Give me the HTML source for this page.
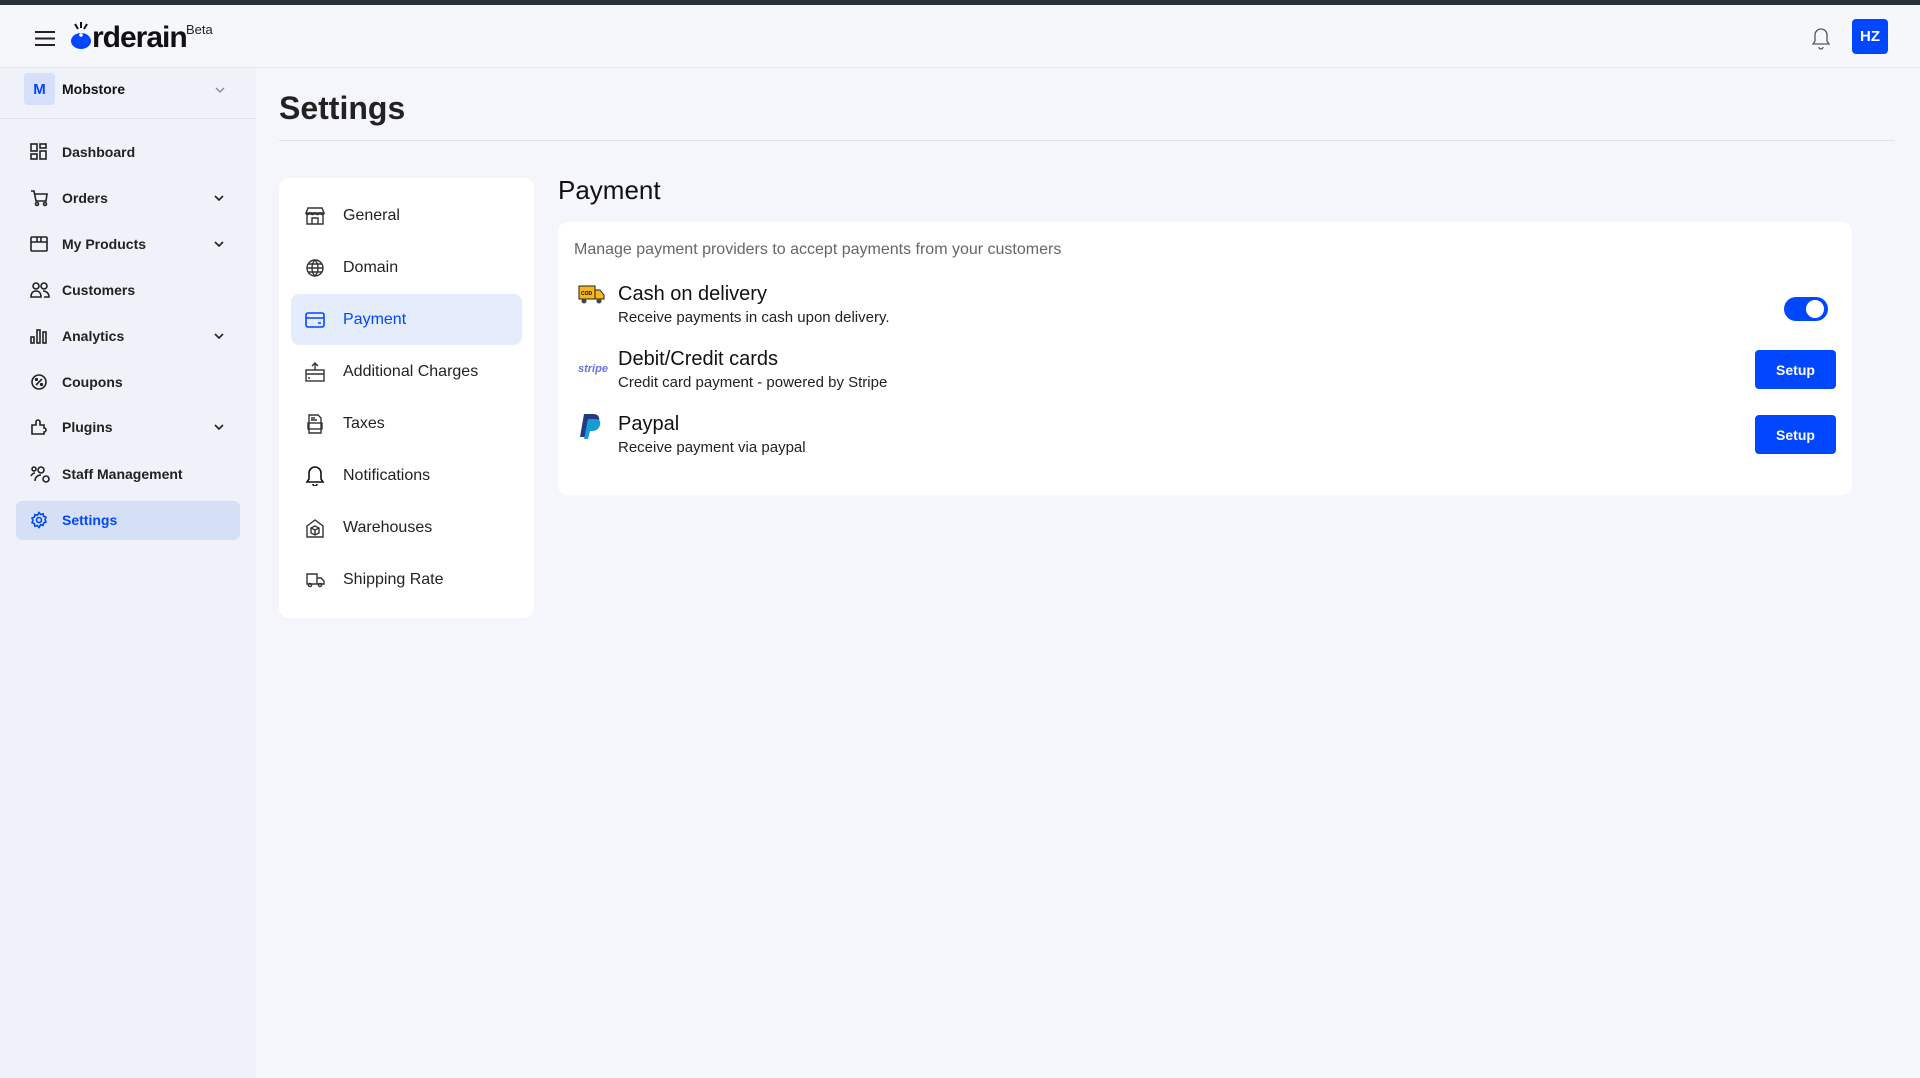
<!DOCTYPE html>
<html><head><meta charset="utf-8"><style>
*{box-sizing:border-box;margin:0;padding:0}
body{width:1920px;height:1078px;overflow:hidden;font-family:"Liberation Sans",sans-serif;background:#f5f6fb;color:#111;position:relative}
.top{position:absolute;left:0;top:0;width:1920px;height:5px;background:#263238}
.hdr{position:absolute;left:0;top:5px;width:1920px;height:63px;background:#f6f7fb;border-bottom:1px solid #e4e6ea}
.side{position:absolute;left:0;top:68px;width:256px;height:1010px;background:#eff2f9}
.abs{position:absolute}
.nav{position:absolute;left:0;width:256px;height:38px;display:flex;align-items:center;font-size:14px;font-weight:bold;color:#222}
.nav svg{position:absolute;left:30px}
.nav span{position:absolute;left:62px}
.nav .ch{position:absolute;left:214px}
.menu{position:absolute;left:279px;top:178px;width:255px;height:440px;background:#fff;border-radius:10px}
.mi{position:absolute;left:12px;width:231px;height:51px;display:flex;align-items:center;font-size:16px;color:#222;border-radius:8px}
.mi svg{position:absolute;left:14px}
.mi span{position:absolute;left:52px}
.card{position:absolute;left:558px;top:222px;width:1294px;height:273px;background:#fff;border-radius:10px}
.t{position:absolute;left:60px;font-size:20px;color:#111}
.s{position:absolute;left:60px;font-size:15px;color:#222}
.btn{position:absolute;left:1197px;width:81px;height:39px;background:#0047ff;color:#fff;border-radius:4px;font-size:14px;font-weight:bold;display:flex;align-items:center;justify-content:center}
</style></head><body>
<div class="top"></div>
<div class="hdr">
 <svg class="abs" style="left:34px;top:25px" width="22" height="17"><path d="M1 2H21M1 8.5H21M1 15H21" stroke="#222" stroke-width="2"/></svg>
 <svg class="abs" style="left:70px;top:17px" width="22" height="30"><path d="M5 2L8 7M11 0V6M17 2L14 7" stroke="#111" stroke-width="2"/><path d="M1 19a10 8 0 0 1 20 0a10 8 0 0 1-20 0z" fill="#0047ff"/><circle cx="11" cy="13" r="1.8" fill="#fff"/></svg>
 <div class="abs" style="left:92px;top:16px;font-size:30px;font-weight:bold;letter-spacing:-1px;color:#111">rderain</div>
 <div class="abs" style="left:186px;top:17px;font-size:13px;color:#222">Beta</div>
 <svg class="abs" style="left:1811px;top:22px" width="20" height="24"><path d="M10 2a6 6 0 0 0-6 6v6l-2 3h16l-2-3V8a6 6 0 0 0-6-6zM8 20a2 2 0 0 0 4 0" fill="none" stroke="#555" stroke-width="1.3"/></svg>
 <div class="abs" style="left:1852px;top:14px;width:36px;height:35px;background:#0047ff;border-radius:4px;color:#fff;font-weight:bold;font-size:15px;display:flex;align-items:center;justify-content:center">HZ</div>
</div>
<div class="side">
 <div class="abs" style="left:0;top:50px;width:256px;height:1px;background:#e2e4ea"></div>
 <div class="abs" style="left:24px;top:5px;width:31px;height:32px;background:#d6e0fa;border-radius:4px;color:#0047ff;font-weight:bold;font-size:15px;display:flex;align-items:center;justify-content:center">M</div>
 <div class="abs" style="left:62px;top:13px;font-size:14px;font-weight:bold">Mobstore</div>
 <svg class="abs" style="left:215px;top:19px" width="10" height="6"><path d="M1 1l4 4 4-4" stroke="#888" fill="none" stroke-width="1.3"/></svg>
</div>
<div class="nav" style="top:133px"><svg width="18" height="18" fill="none" stroke="#222" stroke-width="1.6"><rect x="1" y="1" width="6" height="7"/><rect x="10" y="1" width="6" height="4"/><rect x="1" y="11" width="6" height="5"/><rect x="10" y="8" width="6" height="8"/></svg><span>Dashboard</span></div>
<div class="nav" style="top:179px"><svg width="18" height="18" fill="none" stroke="#222" stroke-width="1.6"><path d="M1 2h3l2 10h10l1-7H5"/><circle cx="7" cy="15" r="1.5"/><circle cx="15" cy="15" r="1.5"/></svg><span>Orders</span><svg class="ch" width="10" height="6"><path d="M1 1l4 4 4-4" stroke="#222" fill="none" stroke-width="1.6"/></svg></div>
<div class="nav" style="top:225px"><svg width="18" height="18" fill="none" stroke="#222" stroke-width="1.6"><rect x="1" y="2" width="16" height="14" rx="1"/><path d="M1 7h16M7 2v5M11 2v5"/></svg><span>My Products</span><svg class="ch" width="10" height="6"><path d="M1 1l4 4 4-4" stroke="#222" fill="none" stroke-width="1.6"/></svg></div>
<div class="nav" style="top:271px"><svg width="20" height="18" fill="none" stroke="#222" stroke-width="1.6"><circle cx="6" cy="5" r="3"/><path d="M1 16c0-4 2-6 5-6s5 2 5 6z"/><circle cx="14" cy="5" r="3"/><path d="M13 10c3 0 6 2 6 6h-5"/></svg><span>Customers</span></div>
<div class="nav" style="top:317px"><svg width="18" height="18" fill="none" stroke="#222" stroke-width="1.6"><rect x="1" y="10" width="3" height="6"/><rect x="7" y="3" width="3" height="13"/><rect x="13" y="5" width="3" height="11"/></svg><span>Analytics</span><svg class="ch" width="10" height="6"><path d="M1 1l4 4 4-4" stroke="#222" fill="none" stroke-width="1.6"/></svg></div>
<div class="nav" style="top:363px"><svg width="18" height="18" fill="none" stroke="#222" stroke-width="1.6"><circle cx="9" cy="9" r="7"/><path d="M6 12l6-6"/><circle cx="6.5" cy="6.5" r=".8"/><circle cx="11.5" cy="11.5" r=".8"/></svg><span>Coupons</span></div>
<div class="nav" style="top:408px"><svg width="20" height="18" fill="none" stroke="#222" stroke-width="1.6"><path d="M2 16V7h4V4a2 2 0 0 1 4 0v3h4v3a2 2 0 0 1 0 4v2z"/></svg><span>Plugins</span><svg class="ch" width="10" height="6"><path d="M1 1l4 4 4-4" stroke="#222" fill="none" stroke-width="1.6"/></svg></div>
<div class="nav" style="top:455px"><svg width="20" height="18" fill="none" stroke="#222" stroke-width="1.6"><circle cx="11" cy="5" r="3"/><path d="M5 16c0-4 3-6 6-6"/><circle cx="4" cy="4" r="2"/><path d="M1 11c1-2 2-3 4-3"/><circle cx="16" cy="14" r="3"/></svg><span>Staff Management</span></div>
<div class="abs" style="left:16px;top:501px;width:224px;height:39px;background:#d5e0f7;border-radius:6px"></div>
<div class="nav" style="top:501px;color:#0047ff"><svg width="18" height="18" fill="none" stroke="#0047ff" stroke-width="1.6"><circle cx="9" cy="9" r="2.5"/><path d="M9 1.5l1.6 2 2.5-.7.5 2.5 2.4 1-1 2.3 1 2.3-2.4 1-.5 2.5-2.5-.7L9 16.5l-1.6-2-2.5.7-.5-2.5-2.4-1 1-2.3-1-2.3 2.4-1 .5-2.5 2.5.7z"/></svg><span>Settings</span></div>

<div class="abs" style="left:279px;top:90px;font-size:32px;font-weight:bold;color:#222">Settings</div>
<div class="abs" style="left:279px;top:140px;width:1616px;height:1px;background:#dfe1e6"></div>

<div class="menu">
 <div class="mi" style="top:12px"><svg width="20" height="20" fill="none" stroke="#333" stroke-width="1.4"><path d="M2 7V18h16V7M1 7l2-5h14l2 5zM7 18v-6h6v6M1 7c0 2 3 2 4 0c1 2 4 2 5 0c1 2 4 2 5 0c1 2 4 2 4 0"/></svg><span>General</span></div>
 <div class="mi" style="top:64px"><svg width="20" height="20" fill="none" stroke="#333" stroke-width="1.4"><circle cx="10" cy="10" r="8"/><path d="M2 10h16M10 2c-4 4-4 12 0 16M10 2c4 4 4 12 0 16M3 6h14M3 14h14"/></svg><span>Domain</span></div>
 <div class="mi" style="top:116px;background:#e5edfd;color:#0047ff"><svg width="20" height="20" fill="none" stroke="#0047ff" stroke-width="1.6"><rect x="1" y="3" width="18" height="14" rx="2"/><path d="M1 8h18M13 13h3"/></svg><span>Payment</span></div>
 <div class="mi" style="top:168px"><svg width="20" height="20" fill="none" stroke="#333" stroke-width="1.4"><rect x="1" y="8" width="18" height="11"/><path d="M1 12h18M10 1v7M7 4l3-3 3 3M4 15v2"/></svg><span>Additional Charges</span></div>
 <div class="mi" style="top:220px"><svg width="20" height="20" fill="none" stroke="#333" stroke-width="1.4"><path d="M4 1h9l3 3v15H4z"/><path d="M6 4h4M6 6h6"/><rect x="3" y="9" width="14" height="6"/></svg><span>Taxes</span></div>
 <div class="mi" style="top:272px"><svg width="20" height="20" fill="none" stroke="#111" stroke-width="1.6"><path d="M10 1a6 6 0 0 0-6 6v6l-2 3h16l-2-3V7a6 6 0 0 0-6-6zM8 18a2 2 0 0 0 4 0"/></svg><span>Notifications</span></div>
 <div class="mi" style="top:324px"><svg width="20" height="20" fill="none" stroke="#333" stroke-width="1.4"><path d="M2 8l8-6 8 6v11H2z"/><path d="M6 10l4-2 4 2v5l-4 2-4-2zM6 10l4 2 4-2M10 12v5"/></svg><span>Warehouses</span></div>
 <div class="mi" style="top:376px"><svg width="20" height="20" fill="none" stroke="#333" stroke-width="1.4"><path d="M2 4h10v10H2zM12 8h4l3 3v3h-7"/><circle cx="5" cy="15" r="1.6"/><circle cx="15" cy="15" r="1.6"/></svg><span>Shipping Rate</span></div>
</div>

<div class="abs" style="left:558px;top:175px;font-size:26px;color:#111">Payment</div>
<div class="card">
 <div class="abs" style="left:16px;top:19px;font-size:16px;color:#666">Manage payment providers to accept payments from your customers</div>
 <svg class="abs" style="left:20px;top:62px" width="28" height="22"><rect x="1" y="2" width="16" height="13" fill="#f5b81c" stroke="#222"/><path d="M17 6h5l4 5v4h-9z" fill="#f5b81c" stroke="#222"/><text x="3" y="11" font-size="5" font-family="Liberation Sans" font-weight="bold">COD</text><circle cx="6" cy="17" r="2.5" fill="#444"/><circle cx="21" cy="17" r="2.5" fill="#444"/></svg>
 <div class="t" style="top:61px">Cash on delivery</div>
 <div class="s" style="top:87px">Receive payments in cash upon delivery.</div>
 <div class="abs" style="left:1226px;top:75px;width:44px;height:24px;background:#0047ff;border-radius:12px"><div class="abs" style="left:22px;top:3px;width:18px;height:18px;background:#fff;border-radius:50%"></div></div>
 <div class="abs" style="left:20px;top:141px;font-size:11px;font-weight:bold;color:#6772e5;font-style:italic">stripe</div>
 <div class="t" style="top:126px">Debit/Credit cards</div>
 <div class="s" style="top:152px">Credit card payment - powered by Stripe</div>
 <div class="btn" style="top:128px">Setup</div>
 <svg class="abs" style="left:22px;top:191px" width="22" height="28"><path d="M4 1h9c5 0 7 3 6 7-1 5-4 7-9 7H7l-2 9H0z" fill="#253b80"/><path d="M8 6h7c4 0 6 2 5 6-1 4-4 6-8 6h-2l-2 8H4z" fill="#179bd7"/></svg>
 <div class="t" style="top:191px">Paypal</div>
 <div class="s" style="top:217px">Receive payment via paypal</div>
 <div class="btn" style="top:193px">Setup</div>
</div>
</body></html>
